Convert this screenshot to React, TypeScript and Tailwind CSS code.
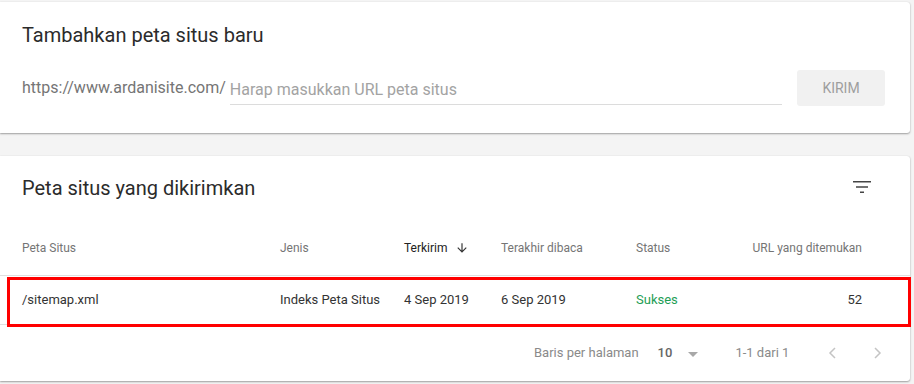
import React from "react";

function FilterIcon() {
  return (
    <svg width="24" height="24" viewBox="0 0 24 24" fill="#444">
      <path d="M10 18h4v-1.6h-4v1.6zM3 6v1.6h18V6H3zm3 5.2v1.6h12v-1.6H6z" />
    </svg>
  );
}

function ArrowDown() {
  return (
    <svg width="14" height="14" viewBox="0 0 24 24" fill="#333">
      <path d="M20 12l-1.41-1.41L13 16.17V4h-2v12.17l-5.58-5.59L4 12l8 8 8-8z" />
    </svg>
  );
}

export default function App() {
  const font = { fontFamily: "Roboto, 'Liberation Sans', sans-serif" };
  return (
    <div className="w-[914px] h-[384px] bg-[#f4f4f4] pt-[2px] overflow-hidden" style={font}>
      {/* Card 1 */}
      <div className="w-[910px] bg-white rounded-r-[3px] shadow-[0_1px_2px_rgba(0,0,0,0.35),0_0_1px_rgba(0,0,0,0.12)] pt-[20px] pb-[27px] pl-[22px] pr-[25px]">
        <div className="text-[20px] leading-[26px] text-[#2b2b2b]">Tambahkan peta situs baru</div>
        <div className="mt-[22px] flex items-center h-[36px]">
          <span className="text-[16px] text-[#757575] mr-[4px]">https://www.ardanisite.com/</span>
          <div className="w-[552px] h-[30px] border-b border-[#dcdcdc] flex items-end pb-[4px] mt-[4px]">
            <span className="text-[16px] leading-[20px] text-[#a3a3a3]">Harap masukkan URL peta situs</span>
          </div>
          <div className="ml-auto w-[88px] h-[36px] rounded-[3px] bg-[#f1f1f1] flex items-center justify-center text-[14px] text-[#9e9e9e]">
            KIRIM
          </div>
        </div>
      </div>

      {/* Card 2 */}
      <div className="relative mt-[23px] w-[910px] h-[225px] bg-white rounded-r-[3px] shadow-[0_1px_2px_rgba(0,0,0,0.35),0_0_1px_rgba(0,0,0,0.12)]">
        <div className="h-[64px] flex items-center pl-[22px] pr-[36px]">
          <div className="text-[20px] text-[#2b2b2b]">Peta situs yang dikirimkan</div>
          <div className="ml-auto mt-[-2px]">
            <FilterIcon />
          </div>
        </div>
        <div className="h-[56px] border-b border-[#e0e0e0] grid grid-cols-[258px_124px_97px_135px_1fr_auto] items-center pl-[22px] pr-[48px] text-[12px] text-[#757575]">
          <div>Peta Situs</div>
          <div>Jenis</div>
          <div className="flex items-center gap-[7px] text-[#222]">
            Terkirim <ArrowDown />
          </div>
          <div>Terakhir dibaca</div>
          <div>Status</div>
          <div className="text-right">URL yang ditemukan</div>
        </div>
        <div className="h-[49px] border-b border-[#e0e0e0] grid grid-cols-[258px_124px_97px_135px_1fr_auto] items-center pl-[22px] pr-[48px] text-[13px] text-[#333]">
          <div>/sitemap.xml</div>
          <div>Indeks Peta Situs</div>
          <div>4 Sep 2019</div>
          <div>6 Sep 2019</div>
          <div className="text-[#1e9e55]">Sukses</div>
          <div className="text-right">52</div>
        </div>
        <div className="h-[56px] flex items-center text-[13px] text-[#8a8a8a] pl-[534px]">
          <span>Baris per halaman</span>
          <span className="ml-[19px] text-[#666] font-medium">10</span>
          <svg className="ml-[15px] mt-[4px]" width="12" height="6" viewBox="0 0 12 6" fill="#a8a8a8">
            <path d="M1 0h10L6 5z" />
          </svg>
          <span className="ml-[36px]">1-1 dari 1</span>
          <svg className="ml-[38px]" width="12" height="14" viewBox="0 0 12 14" fill="none" stroke="#c4c4c4" strokeWidth="1.5">
            <path d="M8 2L3 7l5 5" />
          </svg>
          <svg className="ml-[32px]" width="12" height="14" viewBox="0 0 12 14" fill="none" stroke="#c4c4c4" strokeWidth="1.5">
            <path d="M4 2l5 5-5 5" />
          </svg>
        </div>
        {/* red annotation box */}
        <div className="absolute left-[7px] top-[121px] w-[904px] h-[50px] border-[3px] border-[#ff0000]" />
      </div>
    </div>
  );
}
